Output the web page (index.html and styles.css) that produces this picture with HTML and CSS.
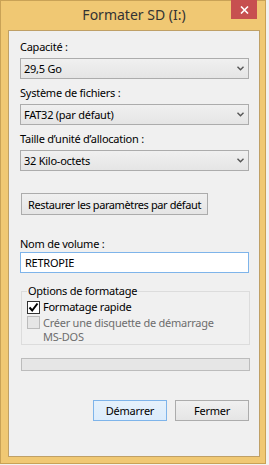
FILE: index.html
```html
<!DOCTYPE html>
<html lang="fr">
<head>
    <meta charset="UTF-8">
    <meta name="viewport" content="width=device-width, initial-scale=1.0">
    <title>Formater SD (I:)</title>
    <link rel="stylesheet" href="styles.css">
</head>
<body>
    <div class="window">
        <div class="titlebar">
            <span class="title">Formater SD (I:)</span>
            <button class="close" type="button" aria-label="Fermer">
                <svg width="9" height="8" viewBox="0 0 9 8"><path d="M1 0.5 L8 7.5 M8 0.5 L1 7.5" stroke="#fff" stroke-width="1.6"/></svg>
            </button>
        </div>
        <div class="client">
            <div class="field">
                <label class="lbl">Capacité :</label>
                <div class="combo">
                    <span>29,5 Go</span>
                    <svg class="chev" width="7" height="5" viewBox="0 0 7 5"><path d="M0.5 0.8 L3.5 3.8 L6.5 0.8" fill="none" stroke="#555" stroke-width="1.4"/></svg>
                </div>
            </div>
            <div class="field">
                <label class="lbl">Système de fichiers :</label>
                <div class="combo">
                    <span>FAT32 (par défaut)</span>
                    <svg class="chev" width="7" height="5" viewBox="0 0 7 5"><path d="M0.5 0.8 L3.5 3.8 L6.5 0.8" fill="none" stroke="#555" stroke-width="1.4"/></svg>
                </div>
            </div>
            <div class="field">
                <label class="lbl">Taille d’unité d’allocation :</label>
                <div class="combo">
                    <span>32 Kilo-octets</span>
                    <svg class="chev" width="7" height="5" viewBox="0 0 7 5"><path d="M0.5 0.8 L3.5 3.8 L6.5 0.8" fill="none" stroke="#555" stroke-width="1.4"/></svg>
                </div>
            </div>

            <button class="btn restore" type="button">Restaurer les paramètres par défaut</button>

            <div class="field volume">
                <label class="lbl">Nom de volume :</label>
                <div class="textbox">RETROPIE</div>
            </div>

            <fieldset class="group">
                <legend>Options de formatage</legend>
                <div class="check">
                    <span class="box checked">
                        <svg width="11" height="11" viewBox="0 0 11 11"><path d="M1.5 5.5 L4.2 8.5 L9.5 1.5" fill="none" stroke="#000" stroke-width="2"/></svg>
                    </span>
                    <span>Formatage rapide</span>
                </div>
                <div class="check disabled">
                    <span class="box"></span>
                    <span>Créer une disquette de démarrage<br>MS-DOS</span>
                </div>
            </fieldset>

            <div class="progress"></div>

            <div class="actions">
                <button class="btn default" type="button">Démarrer</button>
                <button class="btn" type="button">Fermer</button>
            </div>
        </div>
    </div>
</body>
</html>
```
FILE: styles.css
```css
body {
    margin: 0;
    background-color: #f2f2f2;
    font-family: "Noto Sans", "Open Sans", sans-serif;
    color: #000;
}

.window {
    width: 266px;
    height: 464px;
    box-sizing: border-box;
    background-color: #f0c873;
    border: 1px solid #c9a256;
    padding: 0 5px 6px 7px;
    display: flex;
    flex-direction: column;
}

.titlebar {
    height: 29px;
    display: grid;
    grid-template-columns: 1fr auto 1fr;
    align-items: start;
}

.title {
    grid-column: 2;
    font-size: 14px;
    line-height: 28px;
    color: #333;
}

.close {
    grid-column: 3;
    justify-self: end;
    width: 26px;
    height: 19px;
    margin: -1px 3px 0 0;
    padding: 0;
    border: none;
    background-color: #c75050;
    display: flex;
    align-items: center;
    justify-content: center;
}

.client {
    flex: 1;
    background-color: #f0f0f0;
    border: 1px solid #bfa066;
    padding: 8px 10px 0 11px;
    font-size: 11px;
    letter-spacing: -0.25px;
    display: flex;
    flex-direction: column;
    align-items: flex-start;
}

.field {
    display: flex;
    flex-direction: column;
    width: 100%;
    margin-bottom: 6px;
}

.lbl {
    line-height: 16px;
    margin-bottom: 3px;
}

.combo {
    height: 21px;
    box-sizing: border-box;
    border: 1px solid #acacac;
    background: linear-gradient(#f0f0f0, #e5e5e5);
    padding: 0 4px 0 3px;
    display: flex;
    align-items: center;
    justify-content: space-between;
}

.btn {
    font-family: inherit;
    font-size: 11px;
    letter-spacing: -0.25px;
    color: #000;
    height: 21px;
    box-sizing: border-box;
    border: 1px solid #acacac;
    background: linear-gradient(#f0f0f0, #e5e5e5);
    padding: 0 4px;
    white-space: nowrap;
}

.restore {
    width: 187px;
    height: 22px;
    margin: 16px 0 0 1px;
    letter-spacing: -0.4px;
}

.volume {
    margin-top: 21px;
    margin-bottom: 0;
}

.volume .lbl {
    margin-bottom: 0;
}

.textbox {
    height: 21px;
    box-sizing: border-box;
    border: 1px solid #7eb4ea;
    background-color: #fff;
    padding: 0 4px;
    line-height: 19px;
}

.group {
    width: 229px;
    box-sizing: border-box;
    margin: 10px 0 0 1px;
    padding: 0 5px 0 5px;
    border: 1px solid #dcdcdc;
}

.group legend {
    padding: 0 1px;
    line-height: 16px;
}

.check {
    display: flex;
    align-items: center;
    gap: 3px;
    line-height: 16px;
}

.box {
    width: 13px;
    height: 13px;
    box-sizing: border-box;
    border: 1px solid #333;
    background-color: #fff;
    display: flex;
    align-items: center;
    justify-content: center;
}

.check.disabled {
    align-items: flex-start;
    line-height: 14px;
    padding-top: 1px;
    color: #6d6d6d;
}

.check.disabled .box {
    margin-top: 0;
    border-color: #bcbcbc;
    background-color: #e6e6e6;
}

.progress {
    width: 229px;
    height: 13px;
    box-sizing: border-box;
    margin: 13px 0 0 1px;
    border: 1px solid #bcbcbc;
    background-color: #e6e6e6;
}

.actions {
    align-self: stretch;
    display: flex;
    justify-content: flex-end;
    gap: 8px;
    margin-top: 29px;
}

.actions .btn {
    width: 74px;
}

.btn.default {
    border-color: #7eb4ea;
    background: linear-gradient(#e5f1fb, #dcecfc);
}
```
